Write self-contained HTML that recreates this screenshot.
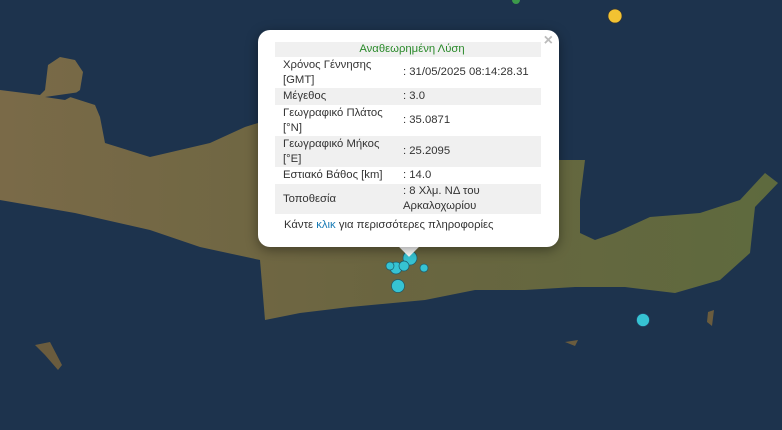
<!DOCTYPE html>
<html><head><meta charset="utf-8"><style>
body{margin:0;width:782px;height:430px;overflow:hidden;background:#1b3048;font-family:"Liberation Sans",sans-serif}
svg{position:absolute;left:0;top:0}
.pop{position:absolute;left:258px;top:30px;width:301px;height:217px;background:#fff;border-radius:12px;box-shadow:0 3px 12px rgba(0,0,0,.4)}
.tip{position:absolute;left:402px;top:240px;width:14px;height:14px;background:#fff;transform:rotate(45deg)}
.x{position:absolute;right:6px;top:2px;color:#bbb;font-size:16px;font-weight:bold}
table{position:absolute;left:17px;top:12px;width:266px;border-collapse:collapse;font-size:11.3px;color:#333}
td{padding:0 0 0 8px;line-height:15px;vertical-align:middle}
tr.g{background:#f0f0f0}
.h{color:#2a8a2a;text-align:center;height:15px}
.f{position:absolute;left:26px;top:189px;font-size:11.3px;color:#333}
.f span{color:#1a7bb5}
</style></head><body>
<svg width="782" height="430">
<defs><linearGradient id="l" x1="0" y1="0" x2="1" y2="0"><stop offset="0" stop-color="#7a6a48"/><stop offset=".5" stop-color="#6a6540"/><stop offset="1" stop-color="#5e6a3e"/></linearGradient></defs>
<rect width="782" height="430" fill="#1d334d"/>
<path fill="url(#l)" d="M0,90 L40,95 L45,90 L48,65 L60,57 L75,60 L83,72 L80,90 L70,97 L95,105 L100,117 L105,143 L150,157 L210,143 L245,127 L300,110 L560,160 L585,160 L580,200 L580,233 L595,240 L615,233 L650,217 L700,213 L740,200 L765,173 L778,183 L755,207 L750,253 L720,280 L675,293 L625,287 L575,287 L525,290 L475,290 L425,300 L350,307 L300,313 L265,320 L260,260 L200,247 L150,230 L75,213 L0,200 Z"/>
<path fill="#1d334d" d="M45,97 L80,92 L65,100 Z"/>
<path fill="#6a5c3e" d="M35,345 L50,342 L62,365 L58,370 L45,355 Z"/>
<path fill="#6a5c3e" d="M565,342 L578,340 L575,346 Z M708,312 L714,310 L712,326 L707,322 Z"/>
<circle cx="615" cy="16" r="7" fill="#f2c232" stroke="#333" stroke-width=".7"/>
<circle cx="516" cy="0" r="4" fill="#3c9a4a"/>
<circle cx="643" cy="320" r="6.5" fill="#36c3d3" stroke="#246" stroke-width=".7"/>
<g fill="#36c3d3" stroke="#1d5a6a" stroke-width=".7">
<circle cx="410" cy="258" r="7"/><circle cx="396" cy="268" r="6"/><circle cx="404" cy="266" r="5"/><circle cx="424" cy="268" r="4"/><circle cx="398" cy="286" r="6.5"/><circle cx="390" cy="266" r="4"/></g>
</svg>
<div class="tip"></div>
<div class="pop"><div class="x">×</div>
<table>
<tr class="g"><td colspan="2" class="h">Αναθεωρημένη Λύση</td></tr>
<tr style="height:31px"><td style="width:112px">Χρόνος Γέννησης<br>[GMT]</td><td>: 31/05/2025 08:14:28.31</td></tr>
<tr class="g" style="height:17px"><td>Μέγεθος</td><td>: 3.0</td></tr>
<tr style="height:31px"><td>Γεωγραφικό Πλάτος<br>[°N]</td><td>: 35.0871</td></tr>
<tr class="g" style="height:31px"><td>Γεωγραφικό Μήκος<br>[°E]</td><td>: 25.2095</td></tr>
<tr style="height:17px"><td>Εστιακό Βάθος [km]</td><td>: 14.0</td></tr>
<tr class="g" style="height:30px"><td>Τοποθεσία</td><td>: 8 Χλμ. ΝΔ του<br>Αρκαλοχωρίου</td></tr>
</table>
<div class="f">Κάντε <span>κλικ</span> για περισσότερες πληροφορίες</div>
</div>
</body></html>
